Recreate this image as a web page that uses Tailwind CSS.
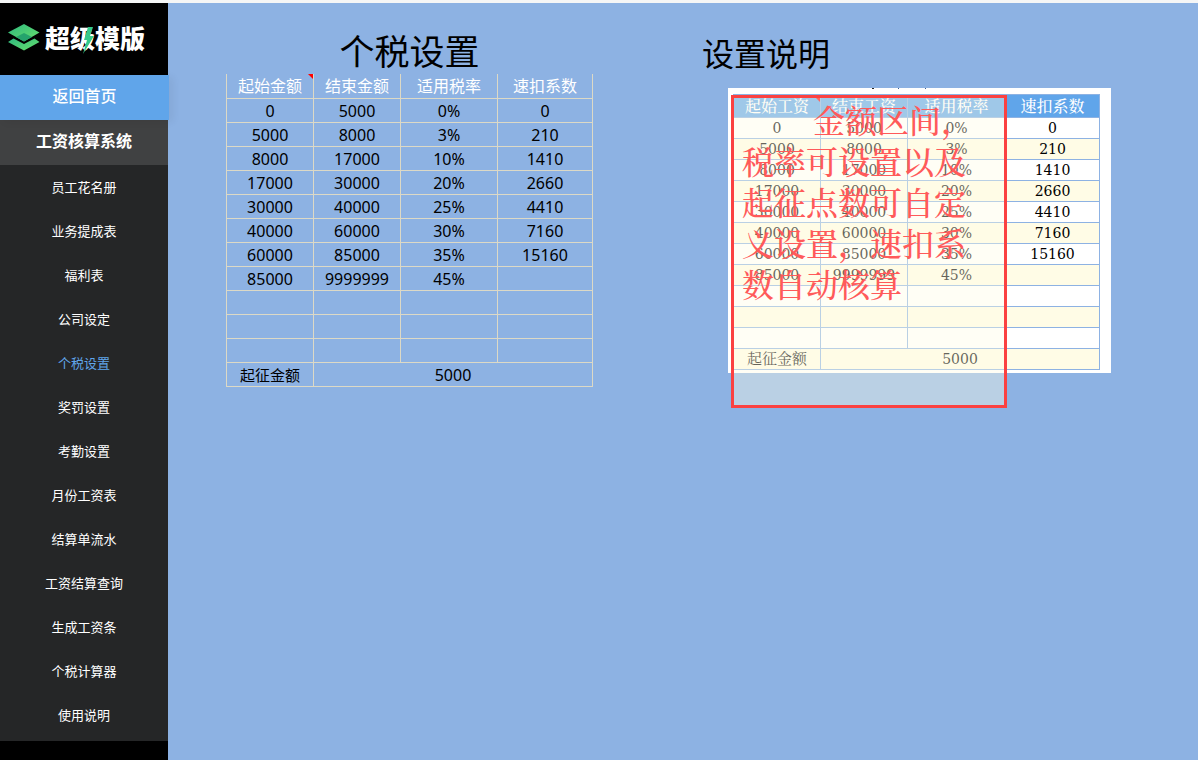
<!DOCTYPE html>
<html lang="zh-CN">
<head>
    <meta charset="UTF-8">
    <meta name="viewport" content="width=device-width, initial-scale=1.0">
    <title>个税设置</title>
    <script src="https://cdn.jsdelivr.net/npm/@tailwindcss/browser@4"></script>
</head>
<body class="flex flex-col min-h-screen bg-[#8db2e3] border-t-3 border-[#f5f6f6] font-['Noto_Sans','Noto_Sans_CJK_SC',sans-serif] text-black">
    <div class="flex flex-1">
        <!-- sidebar -->
        <aside class="w-[168px] shrink-0 bg-black text-white text-center font-['Noto_Sans_CJK_SC',sans-serif]">
            <div class="relative flex items-center h-[72px] pl-2 pb-1 gap-[5px]">
                <svg class="w-8 h-[27px] shrink-0" viewBox="0 0 32 27">
                    <defs>
                        <linearGradient id="leaf" x1="0" y1="0" x2="1" y2="1">
                            <stop offset="0" stop-color="#2fb980"/>
                            <stop offset="1" stop-color="#68e06b"/>
                        </linearGradient>
                    </defs>
                    <path d="M0 18 5.500 14.500 16 20l10.500-5.500L31.500 18 16 26.500z" fill="url(#leaf)"/>
                    <path d="M16 0 31.500 8.500 16 17.500 0 8.500z" fill="url(#leaf)"/>
                    <path d="M16 9 24 13 16 17.500 8 13z" fill="#25a36c"/>
                </svg>
                <span class="text-[25px] leading-9 font-black">超级模版</span>
                <svg class="absolute left-[82px] top-6 w-3 h-[27px]" viewBox="0 0 12 27">
                    <path d="M6 0h5L8 9h4L1 27l4-14H2z" fill="#35c98b"/>
                </svg>
            </div>
            <nav>
                <a href="#" class="relative block w-[169px] h-[45px] leading-10 bg-[#60a5ea] text-base font-medium shadow-[4px_2px_8px_rgba(0,0,0,0.06)]">返回首页</a>
                <a href="#" class="block h-[45px] leading-10 bg-[#404142] text-base font-bold">工资核算系统</a>
                <div class="flex flex-col h-[576px] pb-1 bg-[#252627] text-[13px]">
                    <a href="#" class="flex flex-1 items-center justify-center">员工花名册</a>
                    <a href="#" class="flex flex-1 items-center justify-center">业务提成表</a>
                    <a href="#" class="flex flex-1 items-center justify-center">福利表</a>
                    <a href="#" class="flex flex-1 items-center justify-center">公司设定</a>
                    <a href="#" class="flex flex-1 items-center justify-center text-[#60a5ea]">个税设置</a>
                    <a href="#" class="flex flex-1 items-center justify-center">奖罚设置</a>
                    <a href="#" class="flex flex-1 items-center justify-center">考勤设置</a>
                    <a href="#" class="flex flex-1 items-center justify-center">月份工资表</a>
                    <a href="#" class="flex flex-1 items-center justify-center">结算单流水</a>
                    <a href="#" class="flex flex-1 items-center justify-center">工资结算查询</a>
                    <a href="#" class="flex flex-1 items-center justify-center">生成工资条</a>
                    <a href="#" class="flex flex-1 items-center justify-center">个税计算器</a>
                    <a href="#" class="flex flex-1 items-center justify-center">使用说明</a>
                </div>
            </nav>
        </aside>

        <main class="flex flex-1 items-start pl-[58px]">
            <!-- tax brackets -->
            <section class="w-[367px] shrink-0">
                <h1 class="pt-[27px] text-[35px] leading-11 text-center">个税设置</h1>
                <table class="w-full table-fixed border-collapse text-center text-base leading-[21px] [&_td]:border [&_td]:border-[#dcd9c6] [&_td]:h-6 [&_td]:p-0 [&_td]:pt-[2px] [&_th]:border-x [&_th]:border-[#dcd9c6] [&_th]:h-6 [&_th]:p-0 [&_th]:pt-[2px]">
                    <colgroup>
                        <col class="w-[87px]">
                        <col class="w-[87px]">
                        <col class="w-[97px]">
                        <col class="w-[95px]">
                    </colgroup>
                    <thead class="text-white">
                        <tr>
                            <th class="relative font-normal">起始金额<svg class="absolute right-0 top-0 w-[5px] h-[5px]" viewBox="0 0 5 5"><path d="M0 0h5v5z" fill="#f00"/></svg></th>
                            <th class="font-normal">结束金额</th>
                            <th class="font-normal">适用税率</th>
                            <th class="font-normal">速扣系数</th>
                        </tr>
                    </thead>
                    <tbody>
                        <tr><td>0</td><td>5000</td><td>0%</td><td>0</td></tr>
                        <tr><td>5000</td><td>8000</td><td>3%</td><td>210</td></tr>
                        <tr><td>8000</td><td>17000</td><td>10%</td><td>1410</td></tr>
                        <tr><td>17000</td><td>30000</td><td>20%</td><td>2660</td></tr>
                        <tr><td>30000</td><td>40000</td><td>25%</td><td>4410</td></tr>
                        <tr><td>40000</td><td>60000</td><td>30%</td><td>7160</td></tr>
                        <tr><td>60000</td><td>85000</td><td>35%</td><td>15160</td></tr>
                        <tr><td>85000</td><td>9999999</td><td>45%</td><td></td></tr>
                        <tr><td></td><td></td><td></td><td></td></tr>
                        <tr><td></td><td></td><td></td><td></td></tr>
                        <tr><td></td><td></td><td></td><td></td></tr>
                        <tr><td class="text-[15px]">起征金额</td><td colspan="3">5000</td></tr>
                    </tbody>
                </table>
            </section>

            <!-- instructions -->
            <section class="ml-[109px] shrink-0">
                <h2 class="pt-[29px] mb-3 text-[32px] leading-11">设置说明</h2>
                <div class="relative ml-[26px] w-[383px] bg-white pt-[6px] pl-[5px] pb-[3px]">
                    <!-- feet of the clipped sheet title -->
                    <svg class="absolute left-[143px] top-0 w-[56px] h-px" viewBox="0 0 56 1"><path d="M1 0h2v1H1z" fill="#222"/><path d="M27 0h1v1h-1zM54 0h1v1h-1z" fill="#3c5f96"/></svg>
                    <table class="w-[366px] table-fixed border-collapse text-center text-sm leading-5 font-['DejaVu_Serif','Noto_Serif_CJK_SC','Noto_Sans_CJK_SC',serif] [&_td]:border [&_td]:border-[#8db2e3] [&_td]:h-[21px] [&_td]:p-0 [&_th]:border [&_th]:border-[#8db2e3] [&_th]:h-[23px] [&_th]:p-0 [&_th]:pt-[2px]">
                        <colgroup>
                            <col class="w-[87px]">
                            <col class="w-[87px]">
                            <col class="w-[98px]">
                            <col class="w-[94px]">
                        </colgroup>
                        <thead class="bg-[#60a5ea] text-white text-base leading-5">
                            <tr>
                                <th class="relative font-medium">起始工资<svg class="absolute right-0 top-[3px] w-1 h-1" viewBox="0 0 4 4"><path d="M0 0h4v4z" fill="#f00"/></svg></th>
                                <th class="font-medium">结束工资</th>
                                <th class="font-medium">适用税率</th>
                                <th class="font-medium">速扣系数</th>
                            </tr>
                        </thead>
                        <tbody class="[&>tr:nth-child(even)]:bg-[#fffce6]">
                            <tr><td>0</td><td>5000</td><td>0%</td><td>0</td></tr>
                            <tr><td>5000</td><td>8000</td><td>3%</td><td>210</td></tr>
                            <tr><td>8000</td><td>17000</td><td>10%</td><td>1410</td></tr>
                            <tr><td>17000</td><td>30000</td><td>20%</td><td>2660</td></tr>
                            <tr><td>30000</td><td>40000</td><td>25%</td><td>4410</td></tr>
                            <tr><td>40000</td><td>60000</td><td>30%</td><td>7160</td></tr>
                            <tr><td>60000</td><td>85000</td><td>35%</td><td>15160</td></tr>
                            <tr><td>85000</td><td>9999999</td><td>45%</td><td></td></tr>
                            <tr><td></td><td></td><td></td><td></td></tr>
                            <tr><td></td><td></td><td></td><td></td></tr>
                            <tr><td></td><td></td><td></td><td></td></tr>
                            <tr><td class="text-[15px]">起征金额</td><td colspan="3">5000</td></tr>
                        </tbody>
                    </table>
                    <!-- note laid over the sample table -->
                    <p class="absolute left-[3px] top-[7px] w-[276px] h-[313px] border-3 border-[#fb4141] bg-[#fffde6]/40 pt-px pl-2 indent-[71px] text-[32px] leading-[41px] font-medium text-[#ff5a5a] whitespace-nowrap font-['Noto_Serif_CJK_SC','Noto_Sans_CJK_SC',serif]">金额区间，<br>税率可设置以及<br>起征点数可自定<br>义设置，速扣系<br>数自动核算</p>
                </div>
            </section>
        </main>
    </div>
</body>
</html>
